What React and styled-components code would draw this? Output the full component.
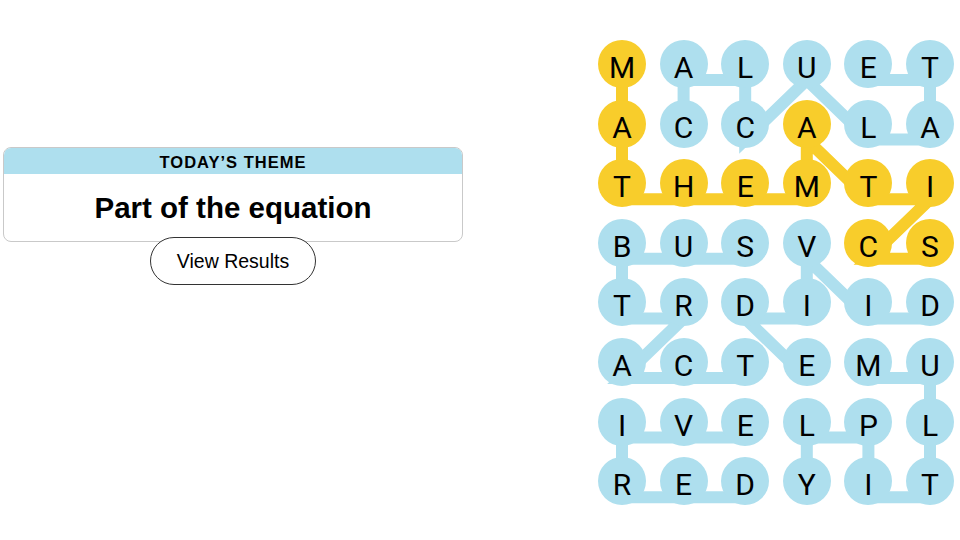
import React from "react";
import styled, { createGlobalStyle } from "styled-components";

const BLUE = "#aedfee";
const YELLOW = "#f8cd2b";

const COL_STEP = 61.6;
const ROW_STEP = 59.6;
const CELL = 48;
const LINE_DROP = 16;

const GlobalStyle = createGlobalStyle`
    html, body {
        margin: 0;
        padding: 0;
        background: #fff;
    }
    body {
        font-family: "Liberation Sans", Arial, sans-serif;
        color: #000;
    }
`;

const Page = styled.div`
    display: flex;
    align-items: flex-start;
    width: 960px;
    height: 540px;
    overflow: hidden;
`;

const Side = styled.section`
    display: flex;
    flex-direction: column;
    align-items: center;
    width: 460px;
    margin: 147px 0 0 3px;
`;

const ThemeCard = styled.div`
    box-sizing: border-box;
    width: 100%;
    border: 1px solid #c9c9c9;
    border-radius: 8px;
    overflow: hidden;
`;

const ThemeHeader = styled.h2`
    margin: 0;
    height: 26px;
    line-height: 29px;
    background: ${BLUE};
    text-align: center;
    font-size: 16.5px;
    font-weight: 700;
    letter-spacing: 1px;
    text-transform: uppercase;
`;

const ThemeText = styled.h1`
    margin: 0;
    height: 67px;
    line-height: 67px;
    text-align: center;
    font-size: 29.5px;
    font-weight: 700;
`;

const ResultsButton = styled.button`
    box-sizing: border-box;
    width: 166px;
    height: 48px;
    margin-top: -5px;
    border: 1px solid #333;
    border-radius: 24px;
    background: #fff;
    color: #000;
    font-family: "Liberation Sans", Arial, sans-serif;
    font-size: 19.5px;
    padding: 0;
    cursor: pointer;
`;

const Board = styled.div`
    position: relative;
    margin: 40px 0 0 135px;
`;

const Grid = styled.div`
    position: relative;
    z-index: 1;
    display: grid;
    grid-template-columns: repeat(6, ${CELL}px);
    grid-auto-rows: ${CELL}px;
    column-gap: ${COL_STEP - CELL}px;
    row-gap: ${ROW_STEP - CELL}px;
`;

const Letter = styled.button`
    box-sizing: border-box;
    display: flex;
    align-items: center;
    justify-content: center;
    width: ${CELL}px;
    height: ${CELL}px;
    padding: 8px 0 0;
    border: none;
    border-radius: 50%;
    background: ${props => props.$spangram ? YELLOW : BLUE};
    color: #000;
    font-family: Roboto, "Liberation Sans", sans-serif;
    font-size: 30px;
    line-height: 1;
`;

const Paths = styled.svg`
    position: absolute;
    top: 0;
    left: 0;
    z-index: 0;
    overflow: visible;
`;

const letters = [
    "MALUET",
    "ACCALA",
    "THEMTI",
    "BUSVCS",
    "TRDIID",
    "ACTEMU",
    "IVELPL",
    "REDYIT",
];

// found words as [row, col] chains, in the order they were traced
const words = [
    { cells: [[1, 1], [0, 1], [0, 2], [1, 2], [0, 3], [1, 4], [1, 5], [0, 5], [0, 4]] },
    { spangram: true, cells: [[0, 0], [1, 0], [2, 0], [2, 1], [2, 2], [2, 3], [1, 3], [2, 4], [2, 5], [3, 4], [3, 5]] },
    { cells: [[3, 2], [3, 1], [3, 0], [4, 0], [4, 1], [5, 0], [5, 1], [5, 2]] },
    { cells: [[4, 5], [4, 4], [3, 3], [4, 3], [4, 2], [5, 3]] },
    { cells: [[5, 4], [5, 5], [6, 5], [7, 5], [7, 4], [6, 4], [6, 3], [7, 3]] },
    { cells: [[7, 2], [7, 1], [7, 0], [6, 0], [6, 1], [6, 2]] },
];

const spangramCells = new Set(words.find(w => w.spangram).cells.map(([r, c]) => `${r}-${c}`));

const point = ([r, c]) => `${CELL / 2 + c * COL_STEP},${CELL / 2 + r * ROW_STEP + LINE_DROP}`;

const App = () => {
    return (
        <>
            <GlobalStyle />
            <Page>
                <Side>
                    <ThemeCard>
                        <ThemeHeader>Today’s Theme</ThemeHeader>
                        <ThemeText>Part of the equation</ThemeText>
                    </ThemeCard>
                    <ResultsButton>View Results</ResultsButton>
                </Side>
                <Board>
                    <Paths width={6 * COL_STEP} height={8 * ROW_STEP}>
                        {words.map((w, i) => (
                            <polyline
                                key={i}
                                points={w.cells.map(point).join(" ")}
                                fill="none"
                                stroke={w.spangram ? YELLOW : BLUE}
                                strokeWidth="12"
                                strokeLinejoin="miter"
                            />
                        ))}
                    </Paths>
                    <Grid>
                        {letters.map((row, r) =>
                            row.split("").map((ch, c) => (
                                <Letter key={`${r}-${c}`} $spangram={spangramCells.has(`${r}-${c}`)}>
                                    {ch}
                                </Letter>
                            ))
                        )}
                    </Grid>
                </Board>
            </Page>
        </>
    );
};

export default App;
